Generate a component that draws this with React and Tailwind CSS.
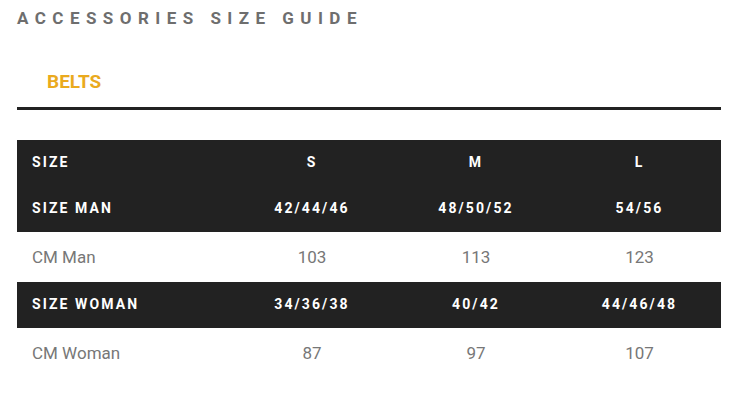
const rows = [
	{ dark: true, label: "SIZE", values: ["S", "M", "L"], h: "h-[46px]" },
	{ dark: true, label: "SIZE MAN", values: ["42/44/46", "48/50/52", "54/56"], h: "h-[46px]" },
	{ dark: false, label: "CM Man", values: ["103", "113", "123"], h: "h-[50px]" },
	{ dark: true, label: "SIZE WOMAN", values: ["34/36/38", "40/42", "44/46/48"], h: "h-[46px]" },
	{ dark: false, label: "CM Woman", values: ["87", "97", "107"], h: "h-[50px]" },
];

const Row = ({ row }) => {
	const cell = row.dark
		? "text-white font-bold text-[14px] tracking-[0.15em] pb-[2px]"
		: "text-[#777] text-[17px] pt-[2px]";
	return (
		<div
			className={`grid grid-cols-[213px_164px_164px_163px] items-center ${row.h} ${
				row.dark ? "bg-[#222222]" : "bg-white"
			}`}
		>
			<div className={`pl-[15px] ${cell}`}>{row.label}</div>
			{row.values.map((v, i) => (
				<div key={i} className={`text-center ${cell}`}>
					{v}
				</div>
			))}
		</div>
	);
};

export default function App() {
	return (
		<div className="w-[741px] h-[406px] bg-white font-['Roboto',sans-serif] px-[17px] overflow-hidden">
			<h2 className="pt-[8px] text-[17px] font-bold tracking-[0.38em] text-[#6e6e6e] leading-[20px]">
				ACCESSORIES SIZE GUIDE
			</h2>
			<div className="mt-[42px] border-b-[3px] border-[#222222] w-[704px]">
				<div className="pl-[30px] pb-[13px] text-[19px] font-bold text-[#eaaa1e] leading-[24px]">
					BELTS
				</div>
			</div>
			<div className="mt-[30px] w-[704px]">
				{rows.map((r, i) => (
					<Row key={i} row={r} />
				))}
			</div>
		</div>
	);
}
